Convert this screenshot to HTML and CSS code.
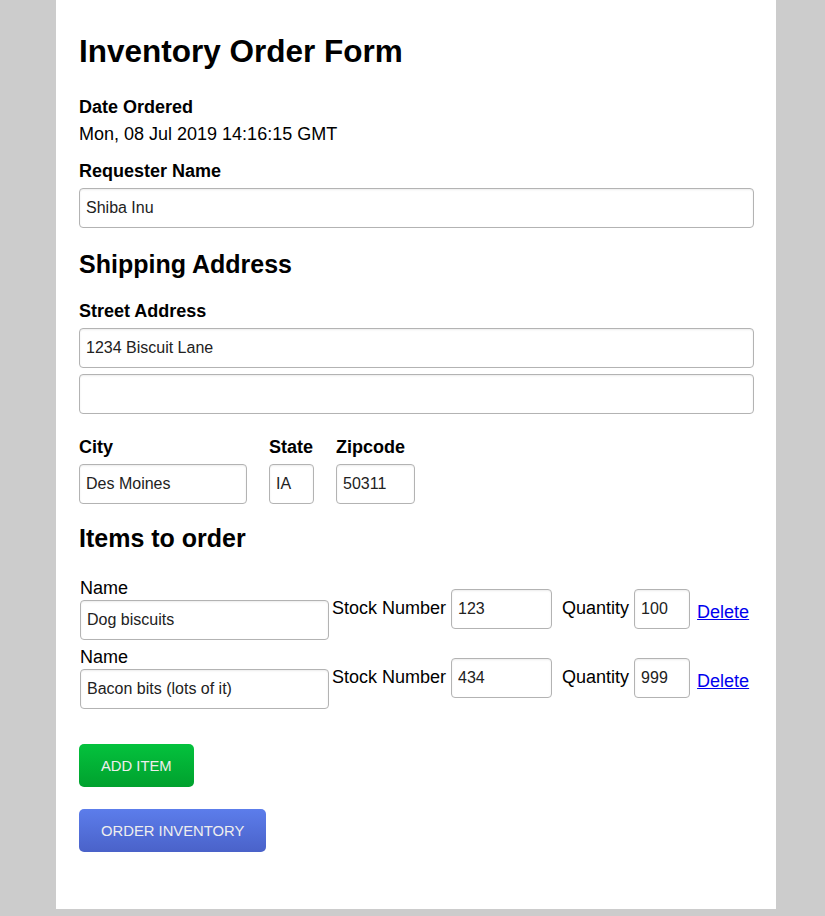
FILE: index.html
```html
<!DOCTYPE html>
<html lang="en">
<head>
<meta charset="utf-8">
<title>Inventory Order Form</title>
<link rel="stylesheet" href="styles.css">
</head>
<body>
<main class="page">
  <h1 class="title">Inventory Order Form</h1>

  <div class="field-label label-date">Date Ordered</div>
  <div class="date-value">Mon, 08 Jul 2019 14:16:15 GMT</div>

  <label class="field-label label-requester" for="requester">Requester Name</label>
  <input class="text-input full" id="requester" type="text" value="Shiba Inu">

  <h2 class="section-title section-shipping">Shipping Address</h2>

  <label class="field-label label-street" for="street1">Street Address</label>
  <input class="text-input full" id="street1" type="text" value="1234 Biscuit Lane">
  <input class="text-input full street2" type="text" value="">

  <div class="city-row">
    <div class="city-field">
      <label class="field-label label-inline" for="city">City</label>
      <input class="text-input city" id="city" type="text" value="Des Moines">
    </div>
    <div class="city-field">
      <label class="field-label label-inline" for="state">State</label>
      <input class="text-input state" id="state" type="text" value="IA">
    </div>
    <div class="city-field">
      <label class="field-label label-inline" for="zip">Zipcode</label>
      <input class="text-input zip" id="zip" type="text" value="50311">
    </div>
  </div>

  <h2 class="section-title section-items">Items to order</h2>

  <div class="items">
    <div class="item-row">
      <div class="item-name">
        <label class="item-label">Name</label>
        <input class="text-input name" type="text" value="Dog biscuits">
      </div>
      <div class="item-stock">
        <label class="item-label-inline">Stock Number</label>
        <input class="text-input stock" type="text" value="123">
      </div>
      <div class="item-qty">
        <label class="item-label-inline">Quantity</label>
        <input class="text-input qty" type="text" value="100">
      </div>
      <a class="delete-link" href="#">Delete</a>
    </div>
    <div class="item-row">
      <div class="item-name">
        <label class="item-label">Name</label>
        <input class="text-input name" type="text" value="Bacon bits (lots of it)">
      </div>
      <div class="item-stock">
        <label class="item-label-inline">Stock Number</label>
        <input class="text-input stock" type="text" value="434">
      </div>
      <div class="item-qty">
        <label class="item-label-inline">Quantity</label>
        <input class="text-input qty" type="text" value="999">
      </div>
      <a class="delete-link" href="#">Delete</a>
    </div>
  </div>

  <button class="btn btn-add" type="button">Add Item</button>
  <button class="btn btn-order" type="submit">Order Inventory</button>
</main>
</body>
</html>
```

FILE: styles.css
```css
html, body {
  margin: 0;
  padding: 0;
}

body {
  background: #cccccc;
  font-family: "Liberation Sans", Arial, sans-serif;
  font-size: 18px;
  color: #000;
}

.page {
  box-sizing: border-box;
  width: 720px;
  margin: 0 0 0 56px;
  background: #ffffff;
  padding: 33px 22px 57px 23px;
}

.title {
  margin: 0;
  font-size: 31.5px;
  line-height: 36px;
  font-weight: bold;
}

.field-label {
  display: block;
  font-weight: bold;
  font-size: 18px;
  line-height: 21px;
}

.label-date {
  margin-top: 28px;
}

.date-value {
  margin-top: 6px;
  font-size: 18px;
  line-height: 21px;
}

.label-requester {
  margin-top: 16px;
}

.text-input {
  box-sizing: border-box;
  display: block;
  height: 40px;
  margin: 6px 0 0 0;
  padding: 0 6px;
  border: 1px solid #b3b3b3;
  border-radius: 4px;
  background: #fff;
  box-shadow: inset 0 1px 2px rgba(0, 0, 0, 0.08);
  font-family: "Liberation Sans", Arial, sans-serif;
  font-size: 16px;
  color: #222;
  outline: none;
}

.full {
  width: 675px;
}

.street2 {
  margin-top: 6px;
}

.section-title {
  margin: 0;
  font-size: 25px;
  line-height: 29px;
  font-weight: bold;
}

.section-shipping {
  margin-top: 22px;
}

.label-street {
  margin-top: 22px;
}

.city-row {
  display: flex;
  gap: 22px;
  margin-top: 23px;
}

.city {
  width: 168px;
}

.state {
  width: 45px;
}

.zip {
  width: 79px;
}

.section-items {
  margin-top: 20px;
}

.items {
  display: flex;
  flex-direction: column;
  gap: 7px;
  margin-top: 25px;
}

.item-row {
  display: flex;
  align-items: center;
}

.item-name {
  margin-left: 1px;
}

.item-label {
  display: block;
  font-size: 18px;
  line-height: 21px;
}

.item-name .text-input {
  margin-top: 1px;
}

.name {
  width: 249px;
}

.item-stock,
.item-qty {
  display: flex;
  align-items: baseline;
}

.item-stock {
  margin-left: 3px;
  gap: 5px;
}

.item-qty {
  margin-left: 10px;
  gap: 5px;
}

.item-label-inline {
  font-size: 18px;
  line-height: 21px;
}

.item-stock .text-input,
.item-qty .text-input {
  margin-top: 0;
}

.stock {
  width: 101px;
}

.qty {
  width: 56px;
}

.delete-link {
  margin-left: 7px;
  margin-top: 6px;
  color: #0000ee;
  text-decoration: underline;
  font-size: 18px;
  line-height: 21px;
}

.btn {
  display: block;
  height: 43px;
  padding: 0 22px;
  border: none;
  border-radius: 5px;
  font-family: "Liberation Sans", Arial, sans-serif;
  font-size: 14.8px;
  text-transform: uppercase;
  color: #eeeeee;
  cursor: pointer;
}

.btn-add {
  margin-top: 35px;
  background: linear-gradient(to bottom, #04c23d, #00a12e);
}

.btn-order {
  margin-top: 22px;
  background: linear-gradient(to bottom, #5c7deb, #4a62c9);
}
```
